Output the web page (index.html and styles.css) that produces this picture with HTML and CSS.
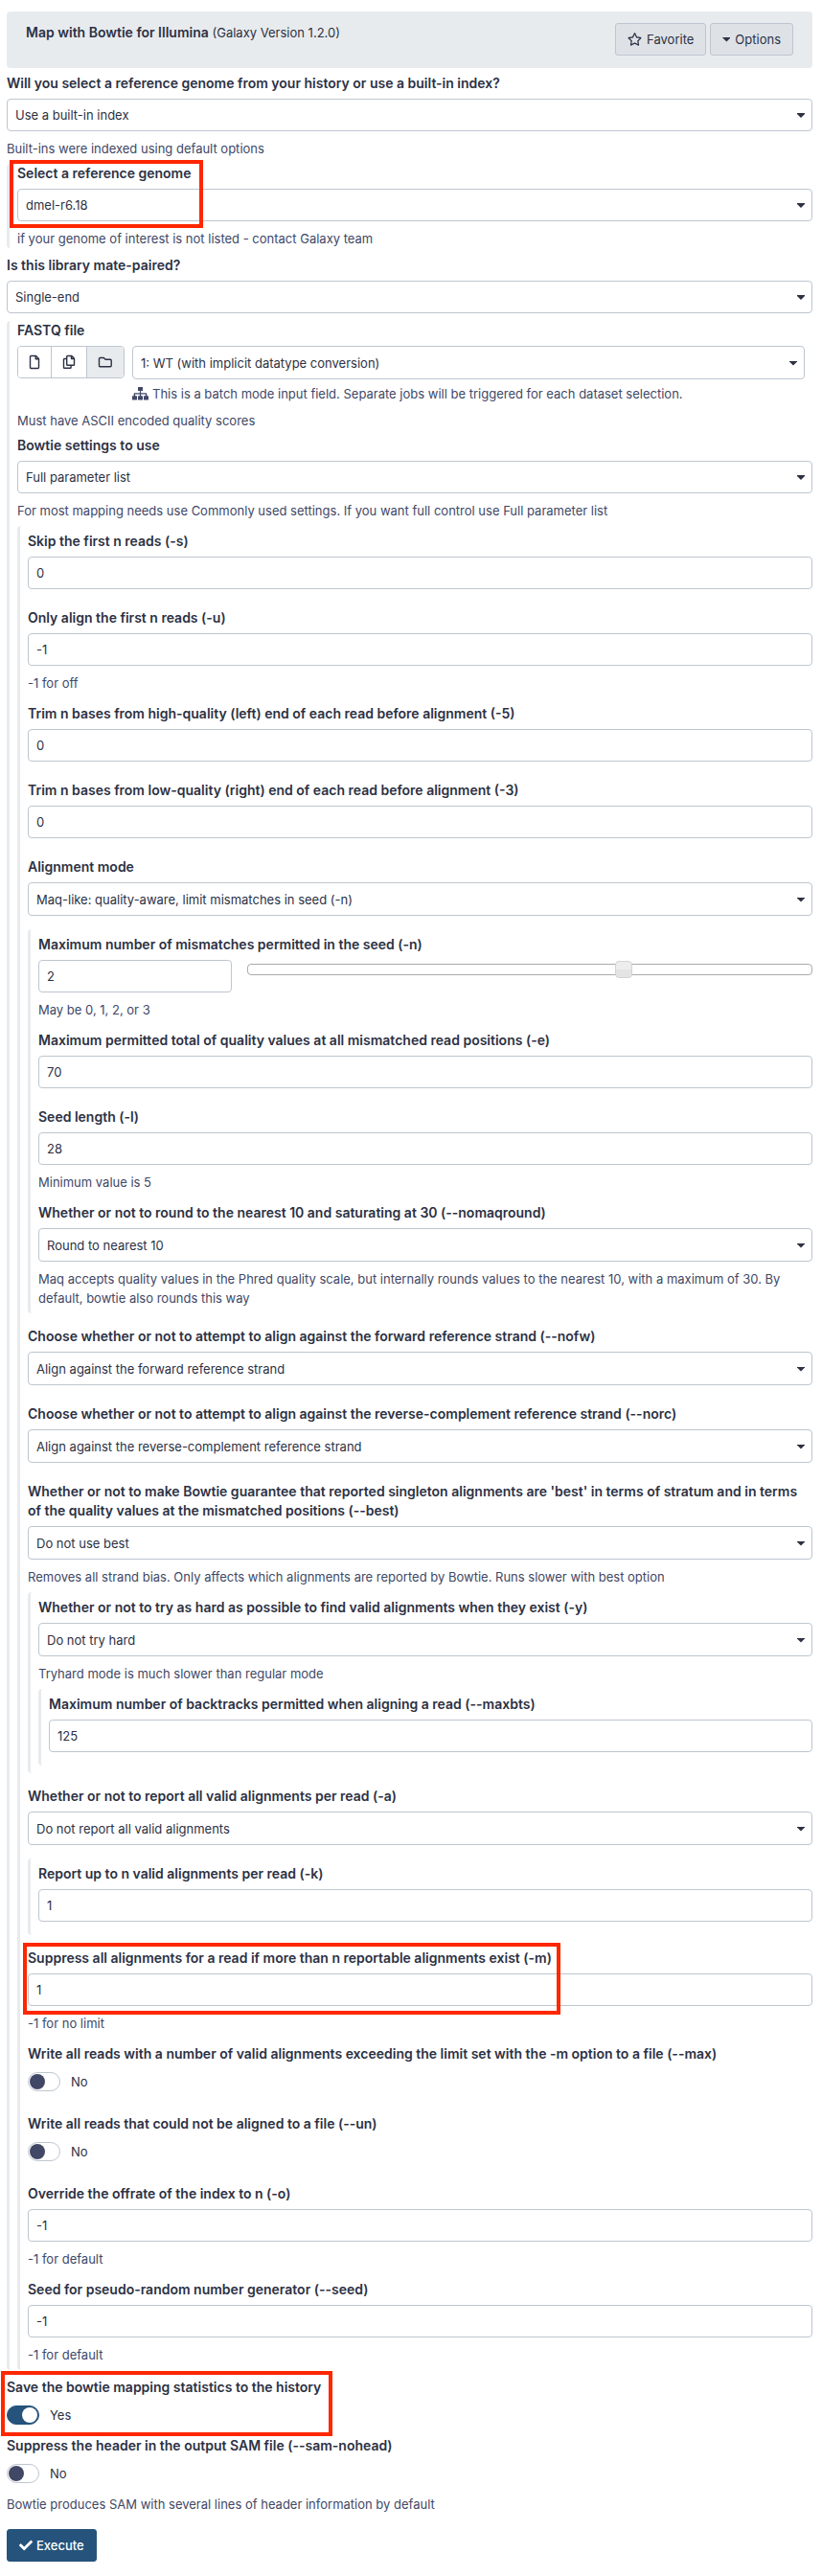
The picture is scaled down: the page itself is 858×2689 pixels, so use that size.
FILE: index.html
```html
<!DOCTYPE html>
<html lang="en">
<head>
<meta charset="utf-8">
<meta name="viewport" content="width=device-width, initial-scale=1">
<title>Map with Bowtie for Illumina</title>
<link rel="stylesheet" href="styles.css">
</head>
<body>
<form class="tool">
  <header class="tool-header">
    <h1 class="tool-title"><strong>Map with Bowtie for Illumina</strong> (Galaxy Version 1.2.0)</h1>
    <div class="tool-actions">
      <button class="btn" type="button">
        <svg class="icon-star" viewBox="0 0 576 512" aria-hidden="true"><path d="M528.1 171.5L382 150.2 316.7 17.8c-11.7-23.6-45.6-23.9-57.4 0L194 150.2 47.9 171.5c-26.2 3.8-36.7 36.1-17.7 54.6l105.7 103-25 145.5c-4.5 26.3 23.2 46 46.4 33.7L288 439.6l130.7 68.7c23.2 12.2 50.9-7.4 46.4-33.7l-25-145.5 105.7-103c19-18.5 8.5-50.8-17.7-54.6zM388.6 312.3l23.7 138.4L288 385.4l-124.3 65.3 23.7-138.4-100.6-98 139-20.2 62.2-126 62.2 126 139 20.2-100.6 98z"/></svg>
        Favorite
      </button>
      <button class="btn" type="button"><span class="caret"></span>Options</button>
    </div>
  </header>

  <div class="field">
    <label class="label" for="genome-source">Will you select a reference genome from your history or use a built-in index?</label>
    <div class="select"><select id="genome-source"><option>Use a built-in index</option></select></div>
    <p class="help">Built-ins were indexed using default options</p>
  </div>
  <div class="group">
    <div class="field">
      <label class="label" for="genome">Select a reference genome</label>
      <div class="select"><select id="genome"><option>dmel-r6.18</option></select></div>
      <p class="help">if your genome of interest is not listed - contact Galaxy team</p>
      <span class="mark mark-genome"></span>
    </div>
  </div>

  <div class="field">
    <label class="label" for="paired">Is this library mate-paired?</label>
    <div class="select"><select id="paired"><option>Single-end</option></select></div>
  </div>
  <div class="group">
    <div class="field">
      <label class="label" for="fastq">FASTQ file</label>
      <div class="data-row">
        <div class="btn-group">
          <button type="button" class="source source-file" aria-label="Single dataset">
            <svg viewBox="0 0 12 16" width="12" height="16"><path d="M2.5 1.5H7.5L10.5 4.5V13.5Q10.5 14.5 9.5 14.5H2.5Q1.5 14.5 1.5 13.5V2.5Q1.5 1.5 2.5 1.5ZM7.2 1.8V4.8H10.2"/></svg>
          </button>
          <button type="button" class="source source-files" aria-label="Multiple datasets">
            <svg viewBox="0 0 14 16" width="14" height="16"><path d="M5.5 1.5H9.8L12.5 4.2V10.5Q12.5 11.3 11.7 11.3H5.5Q4.7 11.3 4.7 10.5V2.3Q4.7 1.5 5.5 1.5ZM9.5 1.8V4.5H12.2M4.6 4.5H2.3Q1.5 4.5 1.5 5.3V13.5Q1.5 14.3 2.3 14.3H8.3Q9.1 14.3 9.1 13.5V11.4"/></svg>
          </button>
          <button type="button" class="source source-folder" aria-label="Dataset collection" aria-pressed="true">
            <svg viewBox="0 0 16 16" width="16" height="16"><path d="M2.5 3.5H6.3L8.1 5.3H13.2Q14.2 5.3 14.2 6.3V11.7Q14.2 12.7 13.2 12.7H2.5Q1.5 12.7 1.5 11.7V4.5Q1.5 3.5 2.5 3.5Z"/></svg>
          </button>
        </div>
        <div class="data-input">
          <div class="select select-data"><select id="fastq"><option>1: WT (with implicit datatype conversion)</option></select></div>
          <p class="batch-note">
            <svg class="icon-sitemap" viewBox="0 0 17 14" width="17" height="14" aria-hidden="true"><path d="M6 0.5Q6 0 6.5 0H10.5Q11 0 11 .5V4H9.1V6.2H14.6Q15.3 6.2 15.3 7V9.3H16.5Q17 9.3 17 9.8V13Q17 13.5 16.5 13.5H12.5Q12 13.5 12 13V9.8Q12 9.3 12.5 9.3H13.9V7.5H9.1V9.3H10.5Q11 9.3 11 9.8V13Q11 13.5 10.5 13.5H6.5Q6 13.5 6 13V9.8Q6 9.3 6.5 9.3H7.9V7.5H3.1V9.3H4.5Q5 9.3 5 9.8V13Q5 13.5 4.5 13.5H.5Q0 13.5 0 13V9.8Q0 9.3 .5 9.3H1.7V7Q1.7 6.2 2.4 6.2H7.9V4H6Z"/></svg>
            This is a batch mode input field. Separate jobs will be triggered for each dataset selection.
          </p>
        </div>
      </div>
      <p class="help">Must have ASCII encoded quality scores</p>
    </div>
    <div class="field">
      <label class="label" for="settings">Bowtie settings to use</label>
      <div class="select"><select id="settings"><option>Full parameter list</option></select></div>
      <p class="help">For most mapping needs use Commonly used settings. If you want full control use Full parameter list</p>
    </div>

    <div class="group params">
      <div class="field">
        <label class="label" for="skip">Skip the first n reads (-s)</label>
        <input class="input" id="skip" type="text" value="0">
      </div>
      <div class="field">
        <label class="label" for="only">Only align the first n reads (-u)</label>
        <input class="input" id="only" type="text" value="-1">
        <p class="help">-1 for off</p>
      </div>
      <div class="field">
        <label class="label" for="trim5">Trim n bases from high-quality (left) end of each read before alignment (-5)</label>
        <input class="input" id="trim5" type="text" value="0">
      </div>
      <div class="field">
        <label class="label" for="trim3">Trim n bases from low-quality (right) end of each read before alignment (-3)</label>
        <input class="input" id="trim3" type="text" value="0">
      </div>
      <div class="field">
        <label class="label" for="mode">Alignment mode</label>
        <div class="select"><select id="mode"><option>Maq-like: quality-aware, limit mismatches in seed (-n)</option></select></div>
      </div>
      <div class="group">
        <div class="field">
          <label class="label" for="mismatches">Maximum number of mismatches permitted in the seed (-n)</label>
          <div class="slider-row">
            <input class="input" id="mismatches" type="text" value="2">
            <div class="slider"><input type="range" min="0" max="3" value="2" aria-label="Maximum number of mismatches"></div>
          </div>
          <p class="help">May be 0, 1, 2, or 3</p>
        </div>
        <div class="field">
          <label class="label" for="quality">Maximum permitted total of quality values at all mismatched read positions (-e)</label>
          <input class="input" id="quality" type="text" value="70">
        </div>
        <div class="field">
          <label class="label" for="seed-length">Seed length (-l)</label>
          <input class="input" id="seed-length" type="text" value="28">
          <p class="help">Minimum value is 5</p>
        </div>
        <div class="field">
          <label class="label" for="round">Whether or not to round to the nearest 10 and saturating at 30 (--nomaqround)</label>
          <div class="select"><select id="round"><option>Round to nearest 10</option></select></div>
          <p class="help">Maq accepts quality values in the Phred quality scale, but internally rounds values to the nearest 10, with a maximum of 30. By default, bowtie also rounds this way</p>
        </div>
      </div>
      <div class="field">
        <label class="label" for="nofw">Choose whether or not to attempt to align against the forward reference strand (--nofw)</label>
        <div class="select"><select id="nofw"><option>Align against the forward reference strand</option></select></div>
      </div>
      <div class="field">
        <label class="label" for="norc">Choose whether or not to attempt to align against the reverse-complement reference strand (--norc)</label>
        <div class="select"><select id="norc"><option>Align against the reverse-complement reference strand</option></select></div>
      </div>
      <div class="field">
        <label class="label" for="best">Whether or not to make Bowtie guarantee that reported singleton alignments are 'best' in terms of stratum and in terms of the quality values at the mismatched positions (--best)</label>
        <div class="select"><select id="best"><option>Do not use best</option></select></div>
        <p class="help">Removes all strand bias. Only affects which alignments are reported by Bowtie. Runs slower with best option</p>
      </div>
      <div class="group">
        <div class="field">
          <label class="label" for="tryhard">Whether or not to try as hard as possible to find valid alignments when they exist (-y)</label>
          <div class="select"><select id="tryhard"><option>Do not try hard</option></select></div>
          <p class="help">Tryhard mode is much slower than regular mode</p>
        </div>
        <div class="group">
          <div class="field">
            <label class="label" for="maxbts">Maximum number of backtracks permitted when aligning a read (--maxbts)</label>
            <input class="input" id="maxbts" type="text" value="125">
          </div>
        </div>
      </div>
      <div class="field">
        <label class="label" for="report-all">Whether or not to report all valid alignments per read (-a)</label>
        <div class="select"><select id="report-all"><option>Do not report all valid alignments</option></select></div>
      </div>
      <div class="group">
        <div class="field">
          <label class="label" for="report-n">Report up to n valid alignments per read (-k)</label>
          <input class="input" id="report-n" type="text" value="1">
        </div>
      </div>
      <div class="field">
        <label class="label" for="suppress">Suppress all alignments for a read if more than n reportable alignments exist (-m)</label>
        <input class="input" id="suppress" type="text" value="1">
        <p class="help">-1 for no limit</p>
        <span class="mark mark-suppress"></span>
      </div>
      <div class="field">
        <div class="label" id="max-label">Write all reads with a number of valid alignments exceeding the limit set with the -m option to a file (--max)</div>
        <label class="switch"><input type="checkbox" role="switch" aria-describedby="max-label">No</label>
      </div>
      <div class="field">
        <div class="label" id="un-label">Write all reads that could not be aligned to a file (--un)</div>
        <label class="switch"><input type="checkbox" role="switch" aria-describedby="un-label">No</label>
      </div>
      <div class="field">
        <label class="label" for="offrate">Override the offrate of the index to n (-o)</label>
        <input class="input" id="offrate" type="text" value="-1">
        <p class="help">-1 for default</p>
      </div>
      <div class="field">
        <label class="label" for="seed">Seed for pseudo-random number generator (--seed)</label>
        <input class="input" id="seed" type="text" value="-1">
        <p class="help">-1 for default</p>
      </div>
    </div>
  </div>

  <div class="field">
    <div class="label" id="stats-label">Save the bowtie mapping statistics to the history</div>
    <label class="switch"><input type="checkbox" role="switch" checked aria-describedby="stats-label">Yes</label>
    <span class="mark mark-stats"></span>
  </div>
  <div class="field field-last">
    <div class="label" id="nohead-label">Suppress the header in the output SAM file (--sam-nohead)</div>
    <label class="switch"><input type="checkbox" role="switch" aria-describedby="nohead-label">No</label>
    <p class="help">Bowtie produces SAM with several lines of header information by default</p>
  </div>

  <button class="btn btn-primary" type="button">
    <svg class="icon-check" viewBox="0 0 512 512" aria-hidden="true"><path d="M173.9 439.4l-166.4-166.4c-10-10-10-26.2 0-36.2l36.2-36.2c10-10 26.2-10 36.2 0L192 312.7 432.1 72.6c10-10 26.2-10 36.2 0l36.2 36.2c10 10 10 26.2 0 36.2l-294.4 294.4c-10 10-26.2 10-36.2 0z"/></svg>
    Execute
  </button>
</form>
</body>
</html>
```

FILE: styles.css
```css
:root {
  --text: #2c3143;
  --muted: #414866;
  --line: #bdc6d0;
  --soft: #e8ebee;
  --brand: #25537b;
  --mark: #ff2600;
  --select-height: 34px;
}

* {
  box-sizing: border-box;
}

body {
  margin: 0;
  padding: 12px 10px 15px 7px;
  background: #fff;
  color: var(--text);
  font: 400 13px/20px Inter, "Liberation Sans", sans-serif;
}

input,
select,
button {
  font: inherit;
  color: inherit;
  margin: 0;
}

/* Header */
.tool-header {
  display: flex;
  justify-content: space-between;
  align-items: flex-start;
  margin-bottom: 6px;
  padding: 12px 20px 13px;
  border-radius: 4px;
  background: var(--soft);
}

.tool-title {
  margin: 0;
  font-size: 13px;
  font-weight: 400;
}

.tool-title strong {
  font-size: 14px;
  font-weight: 600;
}

.tool-actions {
  display: flex;
  gap: 4px;
}

.btn {
  display: inline-flex;
  align-items: center;
  gap: 5px;
  height: 34px;
  padding: 0 12px;
  border: 1px solid var(--line);
  border-radius: 3px;
  background: #dee2e6;
}

.btn svg {
  fill: currentColor;
}

.icon-star {
  width: 15px;
  height: 14px;
}

.icon-check {
  width: 14px;
  height: 14px;
}

.btn-primary {
  gap: 4px;
  border-color: var(--brand);
  background: var(--brand);
  color: #fff;
  font-weight: 500;
}

.caret,
.select::after {
  width: 8px;
  height: 5px;
  background: var(--text);
  clip-path: polygon(0 0, 100% 0, 100% 20%, 50% 100%, 0 20%);
}

/* Fields */
.field {
  position: relative;
}

.label {
  display: block;
  margin-bottom: 6px;
  font-size: 14px;
  font-weight: 600;
}

.help {
  margin: 0;
  padding: 8px 0 6px;
  color: var(--muted);
}

.input,
.select select {
  display: block;
  width: 100%;
  height: 34px;
  padding: 0 8px;
  border: 1px solid var(--line);
  border-radius: 4px;
  background: #fff;
}

.select {
  position: relative;
}

.select select {
  height: var(--select-height);
  appearance: none;
}

.select::after {
  content: "";
  position: absolute;
  top: calc(50% - 2px);
  right: 8px;
  pointer-events: none;
}

/* Nested groups */
.group {
  display: flow-root;
  margin-bottom: 8px;
  padding-left: 8px;
  border-left: 3px solid var(--soft);
  border-radius: 4px;
}

.tool > .group > .field:only-child > .help {
  padding-bottom: 0;
}

.tool > .field:has(> .select:nth-child(2):last-child) {
  margin-bottom: 8px;
}

.params {
  --select-height: 35px;
  margin-bottom: 0;
}

.params .field {
  padding-top: 6px;
}

.params .field:not(:has(> .help)) {
  padding-bottom: 14px;
}

/* Dataset picker */
.data-row {
  display: flex;
  align-items: flex-start;
  gap: 8px;
}

.btn-group {
  display: flex;
  overflow: hidden;
  border: 1px solid var(--line);
  border-radius: 4px;
}

.source {
  display: flex;
  align-items: center;
  justify-content: center;
  height: 32px;
  padding: 0;
  border: 0;
  background: #fff;
}

.source + .source {
  border-left: 1px solid var(--line);
}

.source svg {
  fill: none;
  stroke: var(--text);
  stroke-width: 1.4;
  stroke-linejoin: round;
}

.source-file {
  width: 34px;
}

.source-files {
  width: 37px;
}

.source-folder {
  width: 39px;
  background: var(--soft);
}

.data-input {
  flex: 1;
  padding-right: 8px;
}

.select-data {
  --select-height: 35px;
}

.batch-note {
  display: flex;
  align-items: center;
  gap: 4px;
  margin: 5px 0 0;
  color: var(--muted);
}

.icon-sitemap {
  fill: currentColor;
}

/* Slider */
.slider-row {
  display: grid;
  grid-template-columns: 25% 1fr;
  align-items: start;
  column-gap: 16px;
}

.slider {
  display: flex;
  align-items: center;
  height: 12px;
  margin-top: 4px;
  border: 1px solid #aaa;
  border-radius: 4px;
}

.slider input {
  flex: 1;
  height: 18px;
  margin: 0 -9px;
  appearance: none;
  background: transparent;
}

.slider input::-webkit-slider-thumb {
  width: 18px;
  height: 18px;
  appearance: none;
  border: 1px solid #d3d3d3;
  border-radius: 4px;
  background: linear-gradient(#ededed 50%, #e4e4e4 50%);
}

/* Switches */
.switch {
  display: flex;
  align-items: center;
  gap: 11px;
  width: max-content;
  height: 20px;
  margin: 9px 0 4px;
}

.label:has(+ .switch) {
  margin-bottom: 0;
}

.switch input {
  display: flex;
  align-items: center;
  width: 34px;
  height: 20px;
  padding: 0 1px;
  appearance: none;
  border: 1px solid var(--line);
  border-radius: 10px;
  background: #fff;
}

.switch input::before {
  content: "";
  width: 16px;
  height: 16px;
  border-radius: 50%;
  background: var(--muted);
}

.switch input:checked {
  justify-content: flex-end;
  border-color: var(--brand);
  background: var(--brand);
}

.switch input:checked::before {
  background: #fff;
}

.tool > .field > .switch:not(:has(+ .help)) {
  margin-bottom: 12px;
}

.field-last {
  margin-bottom: 10px;
}

/* Highlight frames drawn over the form */
.mark {
  position: absolute;
  border: 4px solid var(--mark);
  pointer-events: none;
}

.mark-genome {
  top: -4px;
  left: -8px;
  width: 202px;
  height: 71px;
}

.mark-suppress {
  top: 0;
  left: -5px;
  width: 561px;
  height: 75px;
}

.mark-stats {
  top: -7px;
  left: -6px;
  width: 346px;
  height: 68px;
}
```
